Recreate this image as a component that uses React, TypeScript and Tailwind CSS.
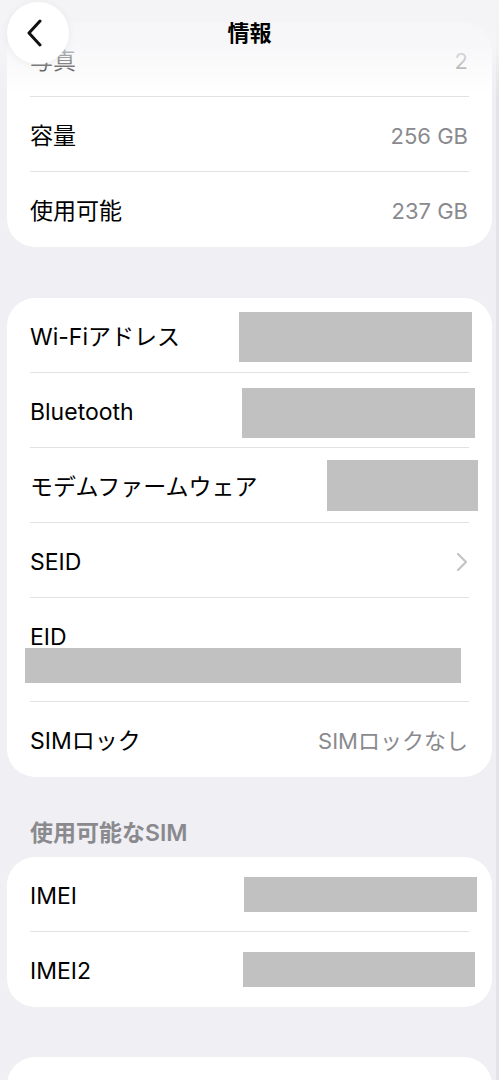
import React from "react";

const font = {
  fontFamily: '"Inter", "Noto Sans CJK JP", sans-serif',
};

type RowProps = {
  label: string;
  value?: string;
  last?: boolean;
  children?: React.ReactNode;
};

const Row = ({ label, value, last, children }: RowProps) => {
  return (
    <div className="flex flex-col">
      <div
        className={
          "flex items-center justify-between pl-[23px] pr-[24px] " +
          (last ? "h-[75px]" : "h-[74px]")
        }
      >
        <span className="mt-[4px] text-[23px] text-black">{label}</span>
        {value && <span className="mt-[4px] text-[22px] text-[#8a8a8e]">{value}</span>}
        {children}
      </div>
      {!last && <div className="mx-[23px] h-px bg-[#e2e2e6]" />}
    </div>
  );
};

const Redact = ({ className }: { className: string }) => (
  <div className={"bg-[#c1c1c1] " + className} />
);

const Chevron = () => (
  <svg width="12" height="20" viewBox="0 0 12 20" fill="none" className="mt-[3px]">
    <path d="M2 2l8 8-8 8" stroke="#c4c4c8" strokeWidth="2.2" strokeLinecap="round" strokeLinejoin="round" />
  </svg>
);

const App = () => {
  return (
    <div
      className="relative h-[1080px] overflow-hidden bg-[#efeff4] shadow-[inset_-3px_0_0_#e4e4e8]"
      style={font}
    >
      <div className="absolute inset-x-0 top-0 z-10 h-[96px] bg-gradient-to-b from-[#f4f4f6] via-[#f6f6f8]/80 to-transparent" />
      <div className="absolute inset-x-0 top-0 z-20 flex h-[66px] items-center justify-center">
        <span className="text-[22px] font-semibold text-black">情報</span>
      </div>
      <button className="absolute left-[7px] top-[2px] z-20 flex h-[62px] w-[62px] items-center justify-center rounded-full bg-white shadow-[0_1px_8px_rgba(0,0,0,0.06)]">
        <svg width="18" height="28" viewBox="0 0 18 28" fill="none" className="mr-[6px]">
          <path d="M14 2L3 14l11 12" stroke="#111" strokeWidth="3" strokeLinecap="round" strokeLinejoin="round" />
        </svg>
      </button>

      <div className="flex flex-col px-[7px] pt-[22px]">
        <div className="rounded-[28px] bg-white">
          <Row label="写真" value="2" />
          <Row label="容量" value="256 GB" />
          <Row label="使用可能" value="237 GB" last />
        </div>

        <div className="mt-[51px] rounded-[28px] bg-white">
          <Row label="Wi-Fiアドレス">
            <Redact className="mr-[-4px] mt-[3px] h-[50px] w-[233px]" />
          </Row>
          <Row label="Bluetooth">
            <Redact className="mr-[-7px] mt-[5px] h-[50px] w-[233px]" />
          </Row>
          <Row label="モデムファームウェア">
            <Redact className="mr-[-10px] h-[51px] w-[151px]" />
          </Row>
          <Row label="SEID">
            <Chevron />
          </Row>
          <div className="flex flex-col">
            <div className="flex h-[103px] flex-col">
              <span className="pl-[23px] pt-[26px] text-[23px] leading-[27px] text-black">EID</span>
              <Redact className="ml-[18px] mt-[-3px] h-[35px] w-[436px]" />
            </div>
            <div className="mx-[23px] h-px bg-[#e2e2e6]" />
          </div>
          <Row label="SIMロック" value="SIMロックなし" last />
        </div>

        <div className="mt-[44px] mb-[12px] pl-[23px] text-[23px] font-semibold leading-[24px] text-[#8a8a8e]">
          使用可能なSIM
        </div>

        <div className="rounded-[28px] bg-white">
          <Row label="IMEI">
            <Redact className="mr-[-9px] mt-[1px] h-[35px] w-[233px]" />
          </Row>
          <Row label="IMEI2" last>
            <Redact className="mr-[-7px] h-[35px] w-[232px]" />
          </Row>
        </div>

        <div className="mt-[50px] h-[80px] rounded-[28px] bg-white" />
      </div>
    </div>
  );
};

export default App;
